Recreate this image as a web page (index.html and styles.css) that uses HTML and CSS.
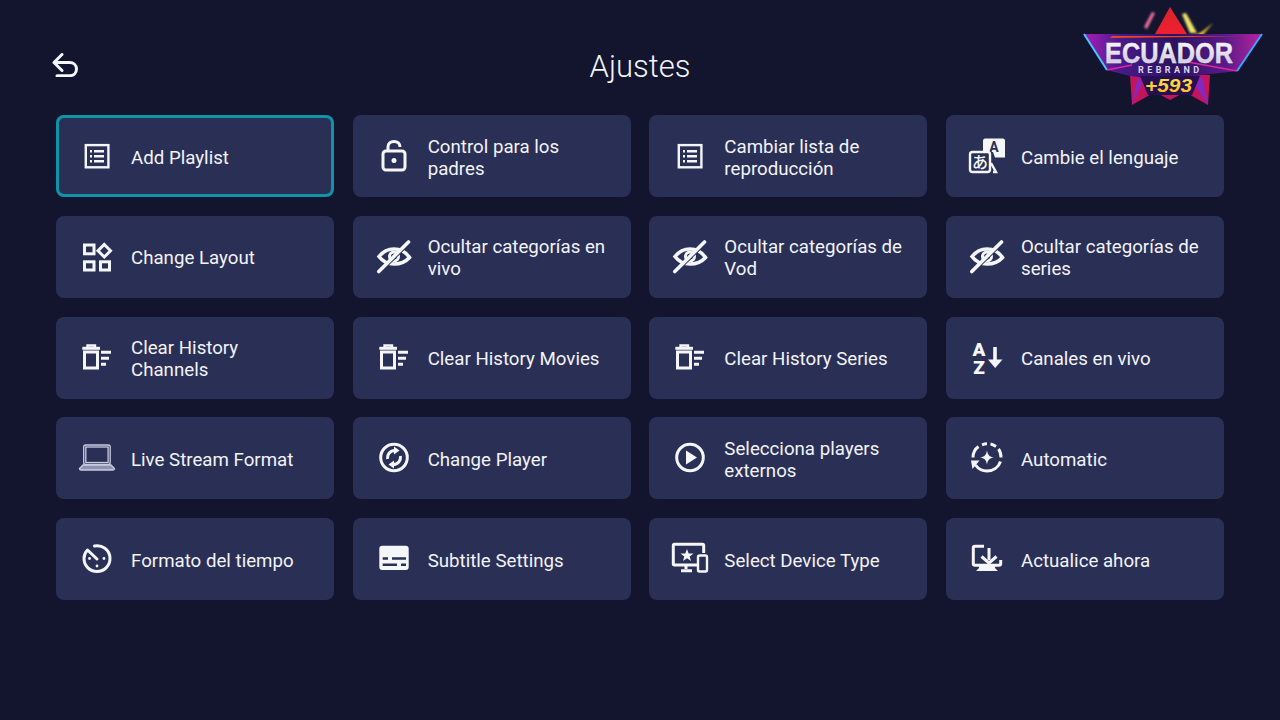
FILE: index.html
```html
<!DOCTYPE html>
<html lang="es">
<head>
  <meta charset="UTF-8">
  <meta name="viewport" content="width=device-width, initial-scale=1.0">
  <title>Ajustes</title>
  <link rel="stylesheet" href="styles.css">
</head>
<body>
  <!-- Shared icons -->
  <svg class="icon-defs" aria-hidden="true">
    <symbol id="i-list" viewBox="0 0 36 36">
      <rect x="6.800" y="7.100" width="22.600" height="22.200" class="line"/>
      <path d="M11 13.200h2M11 18.200h2M11 23.200h2M15 13.200h10M15 18.200h10M15 23.200h10" class="line"/>
    </symbol>
    <symbol id="i-eye" viewBox="0 0 36 36">
      <path d="M3 17.500C7 12.500 12 10 18 10S29.500 12.500 33.500 18.500C29.500 23 24 25 18 25S7 23 3 17.500Z" class="line heavy"/>
      <circle cx="18" cy="17.500" r="4.500" class="line thick"/>
      <path d="M3 33.500 33.500 3.500" class="gap"/>
      <path d="M2.800 32.500 32.500 3" class="line heavy round"/>
    </symbol>
    <symbol id="i-clear" viewBox="0 0 36 36">
      <path d="M3.300 8.300H21" class="line thick"/>
      <path d="M8.500 7V5.500H16V7" class="line"/>
      <rect x="5.500" y="12" width="13" height="16" class="line thick"/>
      <path d="M22 12.300H32M22 18.300H30M22 24.300H27" class="line thick"/>
    </symbol>
  </svg>

  <header class="top-bar">
    <a class="back" href="#" aria-label="Volver">
      <svg width="26" height="24" viewBox="0 0 26 24">
        <path d="M10 1.500 2 9.500 10 17.500M2 9.500H17.500C21.500 9.500 24.500 12 24.500 16S21.500 22.800 17.500 22.800H5" class="line thick round"/>
      </svg>
    </a>
    <h1>Ajustes</h1>
  </header>

  <!-- Logo sits over the header corner -->
  <svg class="logo" width="210" height="115" viewBox="0 0 210 115" aria-label="Ecuador Rebrand +593">
    <defs>
      <linearGradient id="banner" x1="0" x2="1" y1="0" y2="0">
        <stop offset="0" stop-color="#a81fb8"/>
        <stop offset="0.2" stop-color="#4a1a8c"/>
        <stop offset="0.5" stop-color="#2c1260"/>
        <stop offset="0.8" stop-color="#5a1a8c"/>
        <stop offset="1" stop-color="#c0229c"/>
      </linearGradient>
      <linearGradient id="edge" x1="0" x2="1" y1="0" y2="0">
        <stop offset="0" stop-color="#c02fd8"/>
        <stop offset="0.45" stop-color="#ff5a24"/>
        <stop offset="0.65" stop-color="#ffc828"/>
        <stop offset="1" stop-color="#d83bd0"/>
      </linearGradient>
      <linearGradient id="ecuador" x1="0" x2="0" y1="0" y2="1">
        <stop offset="0" stop-color="#ffffff"/>
        <stop offset="1" stop-color="#c4c2d4"/>
      </linearGradient>
      <linearGradient id="apex" x1="0" x2="0" y1="0" y2="1">
        <stop offset="0" stop-color="#d8242e"/>
        <stop offset="1" stop-color="#f01f30"/>
      </linearGradient>
      <linearGradient id="gold" x1="0" x2="0" y1="0" y2="1">
        <stop offset="0" stop-color="#ffe94a"/>
        <stop offset="1" stop-color="#ffb81e"/>
      </linearGradient>
      <filter id="soft"><feGaussianBlur stdDeviation="0.800"/></filter>
    </defs>
    <path d="M100 7 85 34H117Z" fill="url(#apex)"/>
    <path d="M74 27 82 12 85 13 77 29Z" fill="#ef6f9d" filter="url(#soft)"/>
    <path d="M112 14 116 13 127 33H120Z" fill="#f0e36a" filter="url(#soft)"/>
    <path d="M143 23 131 37 122 37 133 31Z" fill="#f6c92c" filter="url(#soft)"/>
    <path d="M60 75 62 105 85 92 100 100 115 92 138 105 140 75Z" fill="#c4145e"/>
    <path d="M62 105 72 84 68 76ZM138 105 124 84 132 76Z" fill="#8428c0"/>
    <path d="M14 34H192L167 71 132 75 100 81 60 76 37 70Z" fill="url(#banner)"/>
    <path d="M42 36H170L120 37 40 38Z" fill="#e8461e"/>
    <path d="M14 34H192" fill="none" stroke="url(#edge)" stroke-width="2"/>
    <path d="M14 34 37 70" fill="none" stroke="#45c8ff" stroke-width="2"/>
    <path d="M37 70 62 65M167 71 118 62" fill="none" stroke="#e0289c" stroke-width="1.500"/>
    <path d="M192 34 167 71" fill="none" stroke="#38a6ff" stroke-width="2"/>
    <path d="M70 76H130L122 95H78Z" fill="#241052"/>
    <text x="99" y="63" class="logo-name" fill="url(#ecuador)" textLength="128" lengthAdjust="spacingAndGlyphs">ECUADOR</text>
    <text x="98.500" y="73" class="logo-sub" textLength="61">REBRAND</text>
    <text x="98.500" y="92" class="logo-num" fill="url(#gold)" textLength="47" lengthAdjust="spacingAndGlyphs">+593</text>
  </svg>

  <main class="settings-grid">
    <a class="tile active" href="#">
      <svg class="tile-icon"><use href="#i-list"/></svg>
      <span>Add Playlist</span>
    </a>
    <a class="tile" href="#">
      <svg class="tile-icon" viewBox="0 0 36 36">
        <rect x="7" y="13" width="22" height="19" rx="3" class="line thick"/>
        <path d="M12 13V9C12 5.500 14.500 3.500 18 3.500S24 5.500 24 9" class="line thick"/>
        <circle cx="18" cy="22.500" r="2.500" class="solid"/>
      </svg>
      <span>Control para los padres</span>
    </a>
    <a class="tile" href="#">
      <svg class="tile-icon"><use href="#i-list"/></svg>
      <span>Cambiar lista de reproducción</span>
    </a>
    <a class="tile" href="#">
      <svg class="tile-icon" viewBox="0 0 36 36">
        <path d="M16 0.500H34C35 0.500 36 1.500 36 2.500V19.500H26L24 14H14V2.500C14 1.500 15 0.500 16 0.500Z" class="solid"/>
        <text x="25" y="13.500" class="glyph-a">A</text>
        <rect x="1" y="14" width="20" height="20" rx="2.500" class="line"/>
        <text x="11" y="30" class="glyph-ja">あ</text>
        <path d="M22 25 27 34H24" class="line"/>
      </svg>
      <span>Cambie el lenguaje</span>
    </a>

    <a class="tile" href="#">
      <svg class="tile-icon" viewBox="0 0 36 36">
        <rect x="5.500" y="6" width="9.500" height="8.800" class="line thick"/>
        <rect x="5.500" y="22.800" width="9.500" height="8.200" class="line thick"/>
        <rect x="21.500" y="22.800" width="9" height="8.200" class="line thick"/>
        <path d="M25.300 5.500 31.500 11.800 25.300 18 19 11.800Z" class="line thick"/>
      </svg>
      <span>Change Layout</span>
    </a>
    <a class="tile" href="#">
      <svg class="tile-icon"><use href="#i-eye"/></svg>
      <span>Ocultar categorías en vivo</span>
    </a>
    <a class="tile" href="#">
      <svg class="tile-icon"><use href="#i-eye"/></svg>
      <span>Ocultar categorías de Vod</span>
    </a>
    <a class="tile" href="#">
      <svg class="tile-icon"><use href="#i-eye"/></svg>
      <span>Ocultar categorías de series</span>
    </a>

    <a class="tile" href="#">
      <svg class="tile-icon"><use href="#i-clear"/></svg>
      <span>Clear History Channels</span>
    </a>
    <a class="tile" href="#">
      <svg class="tile-icon"><use href="#i-clear"/></svg>
      <span>Clear History Movies</span>
    </a>
    <a class="tile" href="#">
      <svg class="tile-icon"><use href="#i-clear"/></svg>
      <span>Clear History Series</span>
    </a>
    <a class="tile" href="#">
      <svg class="tile-icon" viewBox="0 0 36 36">
        <text x="10" y="16" class="glyph-az">A</text>
        <text x="10" y="33.500" class="glyph-az">Z</text>
        <path d="M26 7V21" class="line heavy"/>
        <path d="M19 19.500H33.500L26.200 28Z" class="solid"/>
      </svg>
      <span>Canales en vivo</span>
    </a>

    <a class="tile" href="#">
      <svg class="tile-icon" viewBox="0 0 36 36">
        <rect x="4.700" y="5" width="26.500" height="19.500" rx="2" class="thin"/>
        <rect x="6.800" y="7" width="22.300" height="15.500" class="thin"/>
        <path d="M4 25H32L35.500 28.500C35.500 29.500 35 30 34 30H2C1 30 0.500 29.500 0.500 28.500Z" class="thin fill-soft"/>
      </svg>
      <span>Live Stream Format</span>
    </a>
    <a class="tile" href="#">
      <svg class="tile-icon" viewBox="0 0 36 36">
        <circle cx="18" cy="17.500" r="13.300" class="line thick"/>
        <path d="M11.500 19C11 14.500 14 10.500 19 10.500" class="line thick"/>
        <path d="M18 6.500 23.500 10.500 18 14.500Z" class="solid"/>
        <path d="M24.500 16C25 20.500 22 24.500 17 24.500" class="line thick"/>
        <path d="M18 20.500 12.500 24.500 18 28.500Z" class="solid"/>
      </svg>
      <span>Change Player</span>
    </a>
    <a class="tile" href="#">
      <svg class="tile-icon" viewBox="0 0 36 36">
        <circle cx="18" cy="17.500" r="13.300" class="line thick"/>
        <path d="M14 10.500 25 17.500 14 24.500Z" class="solid"/>
      </svg>
      <span>Selecciona players externos</span>
    </a>
    <a class="tile" href="#">
      <svg class="tile-icon" viewBox="0 0 36 36">
        <path d="M4 17.500C4 13 6 9 9.500 6.500" class="line thick"/>
        <path d="M13 4.800C15 4 16 3.800 18 3.800M21.500 4C24 4.500 25.500 5.500 27 6.500M29.500 9C31 11 32 14 32 17.500" class="line thick"/>
        <path d="M31.500 21.500C29.500 27.500 24 31 18 31 13 31 9 28.500 6.500 25" class="line thick"/>
        <path d="M2 20.500H10.500L3.500 29Z" class="solid"/>
        <path d="M18 10.500C18.800 15 20.500 16.800 25 17.500 20.500 18.200 18.800 20 18 24.500 17.200 20 15.500 18.200 11 17.500 15.500 16.800 17.200 15 18 10.500Z" class="solid"/>
      </svg>
      <span>Automatic</span>
    </a>

    <a class="tile" href="#">
      <svg class="tile-icon" viewBox="0 0 36 36">
        <path d="M15.500 5C22.500 3.500 31 8.500 31 17.500 31 24.500 25.500 30.500 18 30.500S5 24.500 5 17.500C5 14 6.500 11 8.500 9L18 18" class="line thick round"/>
        <circle cx="25" cy="17.500" r="1.400" class="solid"/>
        <circle cx="18" cy="25" r="1.400" class="solid"/>
        <circle cx="10.500" cy="17.500" r="1.400" class="solid"/>
      </svg>
      <span>Formato del tiempo</span>
    </a>
    <a class="tile" href="#">
      <svg class="tile-icon" viewBox="0 0 36 36">
        <rect x="3.300" y="4.700" width="29.400" height="24.300" rx="3" class="solid"/>
        <path d="M6.700 17.500H12M16 17.500H30M6.700 23.700H21M25 23.700H30" class="cut"/>
      </svg>
      <span>Subtitle Settings</span>
    </a>
    <a class="tile" href="#">
      <svg class="tile-icon" viewBox="0 0 36 36">
        <path d="M25 24H2.500C1.800 24 1.300 23.500 1.300 22.800V4.500C1.300 3.800 1.800 3.300 2.500 3.300H30.500C31.200 3.300 31.700 3.800 31.700 4.500V12" class="line thick"/>
        <path d="M14 24V28M9 29.800H20" class="line thick"/>
        <path d="M15 8 16.700 12.500H21.500L17.700 15.500 19 20 15 17.300 11 20 12.300 15.500 8.500 12.500H13.300Z" class="solid"/>
        <rect x="26" y="14.500" width="9" height="16" rx="1.500" class="line"/>
      </svg>
      <span>Select Device Type</span>
    </a>
    <a class="tile" href="#">
      <svg class="tile-icon" viewBox="0 0 36 36">
        <path d="M15 5.300H6C5 5.300 4.300 6 4.300 7V22.500C4.300 23.500 5 24.200 6 24.200H30C31 24.200 31.700 23.500 31.700 22.500V19" class="line thick"/>
        <path d="M20 7V19" class="line thick"/>
        <path d="M12.500 15.500 20 22 27.500 15.500" class="line thick"/>
        <path d="M10 25H26V27L29 30H7L10 27Z" class="solid"/>
      </svg>
      <span>Actualice ahora</span>
    </a>
  </main>
</body>
</html>
```

FILE: styles.css
```css
:root {
  --page-bg: #13152f;
  --tile-bg: #2a2f56;
  --focus: #0e94a5;
  --text: #f2f3f8;
}

html, body {
  height: 100%;
}

body {
  margin: 0;
  background-color: var(--page-bg);
  color: var(--text);
  font-family: Roboto, "Noto Sans", sans-serif;
  overflow: hidden;
  position: relative;
}

.icon-defs {
  display: none;
}

.top-bar {
  height: 115px;
  padding: 19px 56px 0;
  box-sizing: border-box;
  display: flex;
  align-items: center;
  justify-content: center;
  position: relative;
}

.top-bar h1 {
  margin: 0;
  font-size: 31px;
  font-weight: 300;
  line-height: 40px;
}

.back {
  position: absolute;
  left: 52px;
  top: 53px;
  display: block;
  line-height: 0;
}

.logo {
  position: absolute;
  top: 0;
  left: 1070px;
}

.logo-name {
  font-family: "Liberation Sans", sans-serif;
  font-size: 29px;
  font-weight: 700;
  text-anchor: middle;
  stroke: #eeeef5;
  stroke-width: 0.4px;
}

.logo-sub {
  font-family: Roboto, sans-serif;
  font-size: 9px;
  font-weight: 700;
  text-anchor: middle;
  fill: #d9d6e6;
}

.logo-num {
  font-family: "Liberation Sans", sans-serif;
  font-size: 19px;
  font-weight: 700;
  font-style: italic;
  text-anchor: middle;
}

.settings-grid {
  display: grid;
  grid-template-columns: repeat(4, 1fr);
  grid-auto-rows: 82px;
  gap: 18.750px 18.670px;
  padding: 0 56px;
}

.tile {
  display: flex;
  align-items: center;
  gap: 16px;
  padding: 0 18px 0 23px;
  background-color: var(--tile-bg);
  border-radius: 8px;
  color: var(--text);
  font-size: 18.700px;
  line-height: 22px;
  text-decoration: none;
}

.tile span {
  padding-top: 3px;
}

.tile.active {
  box-shadow: inset 0 0 0 3px var(--focus);
}

.tile-icon {
  flex: none;
  width: 36px;
  height: 36px;
  overflow: visible;
}

/* svg paint helpers */
.line, .thin {
  fill: none;
  stroke: #f5f6fa;
  stroke-width: 2.400;
}

.thick {
  stroke-width: 3;
}

.heavy {
  stroke-width: 3.600;
}

.round {
  stroke-linecap: round;
  stroke-linejoin: round;
}

.thin {
  stroke: #c9cce0;
  stroke-width: 1.300;
}

.fill-soft {
  fill: #8d91b2;
}

.solid {
  fill: #f5f6fa;
}

.gap {
  fill: none;
  stroke: var(--tile-bg);
  stroke-width: 3.500;
}

.cut {
  fill: none;
  stroke: var(--tile-bg);
  stroke-width: 2.500;
}

.glyph-a {
  font-family: Roboto, sans-serif;
  font-size: 14px;
  font-weight: 700;
  text-anchor: middle;
  fill: var(--tile-bg);
}

.glyph-ja {
  font-family: "Noto Sans CJK JP", sans-serif;
  font-size: 16px;
  font-weight: 500;
  text-anchor: middle;
  fill: #f5f6fa;
}

.glyph-az {
  font-family: Roboto, sans-serif;
  font-size: 19px;
  font-weight: 900;
  text-anchor: middle;
  fill: #f5f6fa;
}
```
